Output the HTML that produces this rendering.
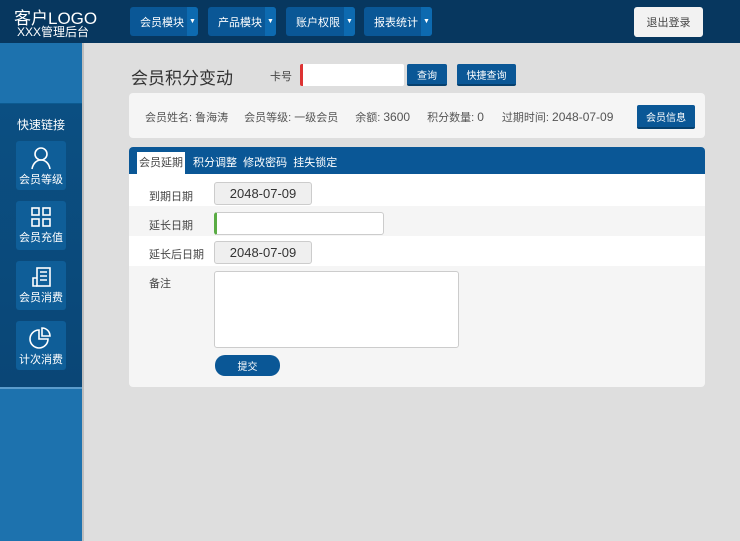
<!DOCTYPE html>
<html><head><meta charset="utf-8"><style>
*{margin:0;padding:0;box-sizing:border-box}
body{width:740px;height:541px;overflow:hidden;background:#dedede;font-family:"Liberation Sans","Noto Sans CJK SC",sans-serif;position:relative;color:#444}
.a{position:absolute}
.hdr{left:0;top:0;width:740px;height:43px;background:#07375f}
.nav{top:7px;height:29px;background:#0a5796;border-radius:3px;color:#fff;font-size:11px;display:flex;align-items:center;padding-left:10px}
.nav i{position:absolute;right:0;top:0;width:11px;height:29px;background:#0d6ab0;border-radius:0 3px 3px 0;font-style:normal;font-size:7px;display:flex;align-items:center;justify-content:center}
.btn{background:#0a5796;color:#fff;font-size:10px;display:flex;align-items:center;justify-content:center;border-radius:2px;border-bottom:2px solid #06406e}
.side{left:0;top:43px;width:82px;height:498px;background:#1d72ae}
.ic{left:16px;width:50px;height:49px;background:#0f5e98;border-radius:3px;color:#fff;font-size:11px;text-align:center}
.ic svg{display:block;margin:5px auto 1px}
.lbl{font-size:11px;color:#444}
.date{left:214px;width:98px;height:23px;background:#efefef;border:1px solid #ccc;border-radius:3px;font-size:13px;display:flex;align-items:center;justify-content:center;color:#333}
</style></head><body>
<div class="a hdr"></div>
<div class="a" style="left:14px;top:4px;color:#fff;font-size:17px">客户LOGO</div>
<div class="a" style="left:17px;top:23px;color:#fff;font-size:12px">XXX管理后台</div>
<div class="a nav" style="left:130px;width:68px">会员模块<i>▼</i></div>
<div class="a nav" style="left:208px;width:68px">产品模块<i>▼</i></div>
<div class="a nav" style="left:286px;width:69px">账户权限<i>▼</i></div>
<div class="a nav" style="left:364px;width:68px">报表统计<i>▼</i></div>
<div class="a" style="left:634px;top:7px;width:69px;height:30px;background:#f2f2f2;border-radius:3px;font-size:11px;color:#444;display:flex;align-items:center;justify-content:center">退出登录</div>

<div class="a side"></div>
<div class="a" style="left:0;top:103px;width:82px;height:284px;background:linear-gradient(#0b4f82,#0a4676);border-top:1px solid #0c5a90"></div>
<div class="a" style="left:0;top:387px;width:82px;height:2px;background:#5b9ccc"></div>
<div class="a" style="left:82px;top:43px;width:2px;height:498px;background:#bdbdbd"></div>
<div class="a" style="left:0;top:116px;width:82px;text-align:center;color:#fff;font-size:12px">快速链接</div>
<div class="a ic" style="top:141px"><svg width="22" height="24" viewBox="0 0 22 24" fill="none" stroke="#fff" stroke-width="1.6"><circle cx="11" cy="8" r="6"/><path d="M2 23c1-6 5-9 9-9s8 3 9 9"/></svg>会员等级</div>
<div class="a ic" style="top:201px"><svg width="22" height="22" viewBox="0 0 22 22" fill="none" stroke="#fff" stroke-width="1.6"><rect x="2" y="2" width="7" height="7"/><rect x="13" y="2" width="7" height="7"/><rect x="2" y="13" width="7" height="7"/><rect x="13" y="13" width="7" height="7"/></svg>会员充值</div>
<div class="a ic" style="top:261px"><svg width="22" height="22" viewBox="0 0 22 22" fill="none" stroke="#fff" stroke-width="1.6"><rect x="7" y="2" width="13" height="18"/><path d="M10 6h7M10 10h7M10 14h7M7 20H3v-8h4"/></svg>会员消费</div>
<div class="a ic" style="top:321px"><svg width="24" height="24" viewBox="0 0 24 24" fill="none" stroke="#fff" stroke-width="1.6"><path d="M10 4a9 9 0 1 0 9 9h-9z"/><path d="M13 2v8h8a8 8 0 0 0-8-8z"/></svg>计次消费</div>

<div class="a" style="left:131px;top:64px;font-size:17px;color:#333">会员积分变动</div>
<div class="a lbl" style="left:270px;top:68px">卡号</div>
<div class="a" style="left:300px;top:64px;width:104px;height:22px;background:#fff;border-left:3px solid #d33;border-radius:2px"></div>
<div class="a btn" style="left:407px;top:64px;width:40px;height:22px">查询</div>
<div class="a btn" style="left:457px;top:64px;width:59px;height:22px">快捷查询</div>

<div class="a" style="left:129px;top:93px;width:576px;height:45px;background:#f5f5f5;border-radius:4px"></div>
<div class="a" style="left:145px;top:109px;font-size:11px;color:#555;white-space:nowrap">会员姓名: 鲁海涛<span style="margin-left:16px">会员等级: 一级会员</span><span style="margin-left:17px">余额: <span style="font-size:12px">3600</span></span><span style="margin-left:17px">积分数量: <span style="font-size:12px">0</span></span><span style="margin-left:18px">过期时间: <span style="font-size:12px">2048-07-09</span></span></div>
<div class="a btn" style="left:637px;top:105px;width:58px;height:24px">会员信息</div>

<div class="a" style="left:129px;top:147px;width:576px;height:240px;background:#f5f5f5;border-radius:4px;overflow:hidden">
<div class="a" style="left:0;top:0;width:576px;height:27px;background:#0a5796"></div>
<div class="a" style="left:8px;top:5px;width:48px;height:22px;background:#fff;font-size:11px;color:#444;text-align:center;line-height:22px">会员延期</div>
<div class="a" style="left:64px;top:5px;font-size:11px;color:#fff;line-height:22px;white-space:nowrap">积分调整&nbsp;&nbsp;修改密码&nbsp;&nbsp;挂失锁定</div>
<div class="a" style="left:0;top:27px;width:576px;height:32px;background:#fff"></div>
<div class="a" style="left:0;top:89px;width:576px;height:30px;background:#fff"></div>
</div>
<div class="a lbl" style="left:149px;top:188px">到期日期</div>
<div class="a date" style="top:182px">2048-07-09</div>
<div class="a lbl" style="left:149px;top:217px">延长日期</div>
<div class="a" style="left:214px;top:212px;width:170px;height:23px;background:#fff;border:1px solid #ccc;border-left:3px solid #5aac44;border-radius:3px"></div>
<div class="a lbl" style="left:149px;top:246px">延长后日期</div>
<div class="a date" style="top:241px">2048-07-09</div>
<div class="a lbl" style="left:149px;top:275px">备注</div>
<div class="a" style="left:214px;top:271px;width:245px;height:77px;background:#fff;border:1px solid #ccc;border-radius:3px"></div>
<div class="a" style="left:215px;top:355px;width:65px;height:21px;background:#0a5796;border-radius:10px;color:#fff;font-size:10px;display:flex;align-items:center;justify-content:center">提交</div>
</body></html>
